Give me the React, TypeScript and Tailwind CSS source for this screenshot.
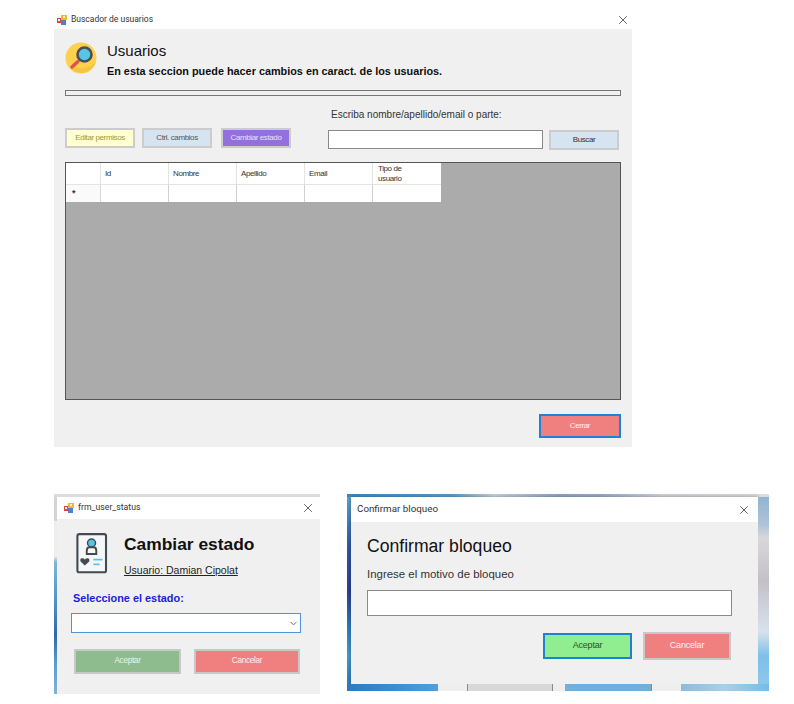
import { ChevronDown, X } from 'lucide-react';

const AppIcon = () => (
  <svg width="10" height="10" viewBox="0 0 10 10" className="shrink-0">
    <rect x="0" y="3" width="5" height="5" fill="#d9483b" />
    <rect x="4" y="0" width="6" height="5" fill="#f2b632" />
    <rect x="4" y="5" width="5" height="5" fill="#4f7fd0" />
    <rect x="1" y="4" width="2" height="2" fill="#ffffff" />
    <rect x="6" y="1" width="2" height="2" fill="#fff3c4" />
  </svg>
);

const SearchIcon = () => (
  <svg width="32" height="32" viewBox="0 0 32 32" className="shrink-0">
    <circle cx="16" cy="16" r="15.5" fill="#fdd04e" />
    <path d="M5 24 L6 27 Q8 29 16 31 Q26 31 31 20 Q20 30 5 24Z" fill="#f6b93b" opacity="0.6" />
    <line x1="7" y1="25" x2="13" y2="19.5" stroke="#e0524f" strokeWidth="3.4" strokeLinecap="round" />
    <circle cx="19.5" cy="12.5" r="7" fill="#55c6e8" stroke="#4a4f57" strokeWidth="2.6" />
  </svg>
);

const UserCardIcon = () => (
  <svg width="32" height="41" viewBox="0 0 33 43" className="shrink-0">
    <rect x="1.2" y="1.2" width="30" height="40" rx="2" fill="#f4f6f7" stroke="#434a54" strokeWidth="2.2" />
    <circle cx="16" cy="10.5" r="4.2" fill="#56c4e6" stroke="#434a54" strokeWidth="1.5" />
    <path d="M11 22 V18.5 Q11 15 14 15 H18 Q21 15 21 18.5 V22 Z" fill="#f4f6f7" stroke="#434a54" strokeWidth="2" />
    <path d="M9 34 L4.5 30 Q3.5 27 6 26.6 Q8 26.4 9 28 Q10 26.4 12 26.6 Q14.5 27 13.5 30 Z" fill="#434a54" />
    <rect x="18" y="27" width="9.5" height="1.8" fill="#56c4e6" />
    <rect x="18" y="32" width="6.5" height="1.8" fill="#56c4e6" />
  </svg>
);

const TitleBar = ({ title, icon, className, textClass }: { title: string; icon?: boolean; className: string; textClass: string }) => (
  <div className={`flex items-center bg-white ${className}`}>
    {icon && <AppIcon />}
    <span className={`flex-1 font-['Roboto',sans-serif] text-[#333] ${textClass}`}>{title}</span>
    <X size={14} strokeWidth={1.2} className="text-[#222]" />
  </div>
);

const FlatButton = ({ label, className }: { label: string; className: string }) => (
  <button className={`flex items-center justify-center border-2 ${className}`}>{label}</button>
);

const columns = ['Id', 'Nombre', 'Apellido', 'Email'];

const UserGrid = () => (
  <div className="mt-[12px] h-[238px] w-[556px] border border-[#555] bg-[#ababab]">
    <div className="grid w-[375px] grid-cols-[35px_68px_68px_68px_68px_68px] grid-rows-[22px_17px] bg-white text-[8px] tracking-[-0.4px] text-[#333]">
      <div className="border-r border-b border-[#e4e4e4]" />
      {columns.map((c) => (
        <div key={c} className="flex items-center border-r border-b border-[#e4e4e4] pl-[4px]">{c}</div>
      ))}
      <div className="flex items-center border-b border-[#e4e4e4] pl-[5px] leading-[10px]">Tipo de<br />usuario</div>
      <div className="flex items-center border-r border-[#d8d8d8] bg-[#fafafa] pl-[6px] text-[9px] font-bold">*</div>
      <div className="border-r border-[#d0d0d0]" />
      <div className="border-r border-[#d0d0d0]" />
      <div className="border-r border-[#d0d0d0]" />
      <div className="border-r border-[#d0d0d0]" />
      <div />
    </div>
  </div>
);

const UserSearchWindow = () => (
  <div className="w-[578px]">
    <TitleBar title="Buscador de usuarios" icon className="h-[19px] pr-[2px] pl-[3px]" textClass="ml-[4px] text-[8.5px]" />
    <div className="h-[418px] bg-[#f0f0f0] px-[11px] pt-[13px]">
      <div className="flex gap-[10px]">
        <SearchIcon />
        <div>
          <div className="text-[15px] leading-[18px] text-[#111]">Usuarios</div>
          <div className="mt-[3px] text-[10.85px] leading-[16px] font-bold text-[#111]">
            En esta seccion puede hacer cambios en caract. de los usuarios.
          </div>
        </div>
      </div>
      <div className="mt-[11px] h-[6px] w-[556px] border border-[#777] bg-[#f0f0f0]" />
      <div className="mt-[12px] flex items-end">
        <div className="flex gap-[7px] pb-[2px] text-[8px] tracking-[-0.4px]">
          <FlatButton label="Editar permisos" className="h-[20px] w-[70px] border-[#cccccc] bg-[#ffffd2] text-[#9a9a3c]" />
          <FlatButton label="Ctrl. cambios" className="h-[20px] w-[70px] border-[#cccccc] bg-[#d6e4f2] text-[#555]" />
          <FlatButton label="Cambiar estado" className="ml-[2px] h-[20px] w-[70px] border-[#cccccc] bg-[#9370db] text-[#e8e0f8]" />
        </div>
        <div className="ml-[37px]">
          <div className="ml-[3px] text-[10px] leading-[14px] text-[#333]">Escriba nombre/apellido/email o parte:</div>
          <div className="mt-[8px] flex gap-[6px]">
            <div className="h-[19px] w-[215px] border border-[#8a8a8a] bg-white" />
            <FlatButton label="Buscar" className="h-[20px] w-[70px] border-[#cccccc] bg-[#d6e4f2] text-[8px] tracking-[-0.4px] text-[#333]" />
          </div>
        </div>
      </div>
      <UserGrid />
      <div className="mt-[14px] flex justify-end">
        <FlatButton label="Cerrar" className="h-[24px] w-[82px] border-[#1f80d8] bg-[#f08080] text-[8px] tracking-[-0.4px] text-[#fff0f0]" />
      </div>
    </div>
  </div>
);

const StatusDialog = () => (
  <div className="flex h-[200px] w-[266px] flex-col">
    <div className="h-[3px] bg-[#dcdcdc]" />
    <div className="flex flex-1">
      <div className="w-[3px] bg-[linear-gradient(180deg,#d4d4d4_0_12%,#eeeeee_12%_30%,#7fb6d6_33%,#4a8fc4_55%,#2f68a8_70%,#5aa0d0_85%,#7fb4d4)]" />
      <div className="flex-1">
        <TitleBar title="frm_user_status" icon className="h-[22px] pr-[5px] pl-[7px]" textClass="ml-[4px] text-[8.7px]" />
        <div className="h-[175px] bg-[#f0f0f0] px-[14px] pt-[14px]">
          <div className="flex pl-[5px]">
            <UserCardIcon />
            <div className="ml-[16px] pt-[1px]">
              <div className="text-[17.4px] leading-[20px] font-bold text-[#111]">Cambiar estado</div>
              <div className="mt-[10px] text-[10.5px] leading-[13px] text-[#222] underline">Usuario: Damian Cipolat</div>
            </div>
          </div>
          <div className="mt-[14px] ml-[2px] text-[10.9px] leading-[14px] font-bold text-[#1c1cdc]">Seleccione el estado:</div>
          <div className="mt-[8px] flex h-[20px] w-[230px] items-center justify-end border border-[#4a96d8] bg-white pr-[1px]">
            <ChevronDown size={11} className="text-[#666]" />
          </div>
          <div className="mt-[16px] ml-[3px] flex gap-[13px] text-[8.2px] tracking-[-0.3px]">
            <FlatButton label="Aceptar" className="h-[25px] w-[107px] border-[#c8c8c8] bg-[#8fbc8f] text-[#e8f4e8]" />
            <FlatButton label="Cancelar" className="h-[25px] w-[106px] border-[#c8c8c8] bg-[#f08080] text-[#fff0f0]" />
          </div>
        </div>
      </div>
    </div>
  </div>
);

const BlockDialog = () => (
  <div className="flex h-[197px] w-[422px] flex-col">
    <div className="h-[3px] bg-[linear-gradient(90deg,#3f88c0,#5f9cc8_25%,#c6d6dc_35%,#8ea6c8_50%,#9aaccc_60%,#d4d4da_75%,#dcdcdc)]" />
    <div className="flex flex-1">
      <div className="w-[4px] bg-[linear-gradient(180deg,#5aa4cc,#2f5ca8_25%,#2c3f8e_50%,#2f7cc0_70%,#4a9cc8_85%,#2f7cc0)]" />
      <div className="w-[407px] shadow-[0_0_4px_rgba(0,0,0,0.35)]">
        <TitleBar title="Confirmar bloqueo" className="h-[25px] pr-[7px] pl-[6px]" textClass="text-[9.8px]" />
        <div className="h-[162px] bg-[#f0f0f0] px-[16px] pt-[12px]">
          <div className="text-[17.6px] leading-[24px] text-[#111]">Confirmar bloqueo</div>
          <div className="mt-[9px] text-[11.45px] leading-[14px] text-[#333]">Ingrese el motivo de bloqueo</div>
          <div className="mt-[9px] h-[26px] w-[365px] border border-[#8a8a8a] bg-white" />
          <div className="mt-[16px] flex w-[365px] justify-end gap-[11px] pr-[1px] text-[9px] tracking-[-0.2px]">
            <FlatButton label="Aceptar" className="mt-[1px] h-[26px] w-[89px] border-[#1f80d8] bg-[#90ee90] text-[#225522]" />
            <FlatButton label="Cancelar" className="h-[28px] w-[88px] border-[#c8c8c8] bg-[#f08080] text-[#fff0f0]" />
          </div>
        </div>
      </div>
      <div className="flex-1 bg-[linear-gradient(180deg,#8fb4d4,#b0c4d8_15%,#d8d8d8_22%,#c4c0c8_45%,#d8e2ec_72%,#7cc0e8_85%,#8cc8ea)]" />
    </div>
    <div className="flex h-[7px]">
      <div className="w-[91px] bg-[linear-gradient(90deg,#2f78bd,#4f9fd8)]" />
      <div className="w-[29px] bg-[#eeeeee]" />
      <div className="w-[86px] border-x border-[#8a8a8a] bg-[#d8d8d8]" />
      <div className="w-[12px] bg-[#eeeeee]" />
      <div className="w-[87px] border-r border-[#8a8a8a] bg-[#6fb0e0]" />
      <div className="w-[29px] bg-[#eeeeee]" />
      <div className="flex-1 bg-[linear-gradient(90deg,#8cbcdc,#a8d0e8,#74bce8)]" />
    </div>
  </div>
);

export default function App() {
  return (
    <div className="h-[704px] w-[794px] bg-white pt-[10px] pl-[54px] font-['Liberation_Sans',sans-serif]">
      <UserSearchWindow />
      <div className="mt-[47px] flex gap-[27px]">
        <StatusDialog />
        <BlockDialog />
      </div>
    </div>
  );
}
